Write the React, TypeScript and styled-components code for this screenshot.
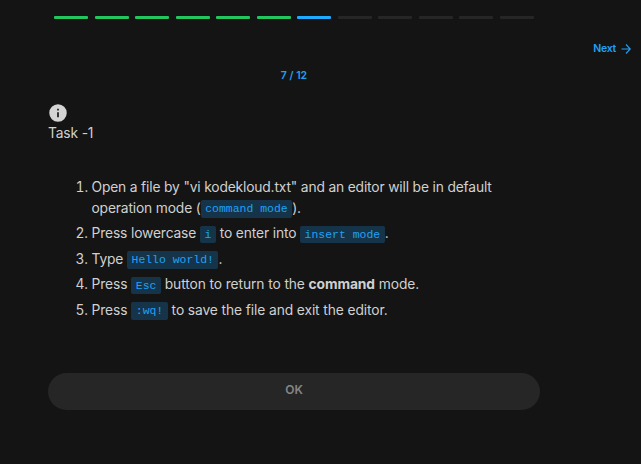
import React from "react";
import styled, { createGlobalStyle } from "styled-components";

const Global = createGlobalStyle`
  * { box-sizing: border-box; }
  body { margin: 0; background: #141414; color: #d0d0d0; font: 13.8px/21px Inter, sans-serif; }
`;
const Page = styled.main`
  display: flex; flex-direction: column; width: 641px; height: 464px; overflow: hidden; background: #141414;
`;
const Progress = styled.div`
  display: grid; grid-template-columns: repeat(12, 34px); column-gap: 6.55px; padding: 16px 0 0 54px; height: 42px;
`;
const Step = styled.span<{ $state: "done" | "current" | "todo" }>`
  height: 3px; border-radius: 1px;
  background: ${(p) => ({ done: "#22c55e", current: "#1eaaff", todo: "#262626" })[p.$state]};
`;
const Nav = styled.div`
  display: flex; justify-content: flex-end; height: 27px; padding-right: 10px;
`;
const NextButton = styled.button`
  display: flex; align-items: center; gap: 5px; height: 13px; padding: 0; border: 0; background: none;
  color: #1fa2f5; font: 600 10.5px/13px Inter, sans-serif; letter-spacing: -0.25px;
`;
const Counter = styled.div`
  width: 492px; margin-left: 48px; height: 34px; text-align: center; color: #1fa2f5; font: 600 10.5px/13px Inter, sans-serif;
`;
const Task = styled.section`
  width: 492px; margin-left: 48px;
`;
const InfoIcon = styled.svg`
  display: block; width: 20px; height: 20px;
`;
const Title = styled.div`
  height: 53px; line-height: 20px; letter-spacing: -0.15px;
`;
const Steps = styled.ol`
  margin: 0; padding: 0.5px 0 0 43.5px; height: 197px;
`;
const Item = styled.li<{ $tracking?: number }>`
  margin-bottom: 4.5px; letter-spacing: ${(p) => p.$tracking ?? -0.1}px;
`;
const Code = styled.code`
  padding: 2.4px 4.6px; border-radius: 2px; background: #163449; color: #1fa2f5;
  font: 11.45px "Liberation Mono", monospace; letter-spacing: 0;
`;
const OkButton = styled.button`
  display: block; width: 492px; height: 37px; padding: 0 0 5px; border: 0; border-radius: 19px;
  background: #262626; color: #858585; font: 600 12px Inter, sans-serif;
`;

export default function App() {
  return (
    <Page>
      <Global />
      <Progress>
        {Array.from({ length: 12 }, (_, i) => (
          <Step key={i} $state={i < 6 ? "done" : i === 6 ? "current" : "todo"} />
        ))}
      </Progress>
      <Nav>
        <NextButton>
          Next
          <svg width="10" height="11" viewBox="0 0 10 11" fill="none" stroke="currentColor" strokeWidth="1.1">
            <path d="M0.5 6H9M5 1.5L9.3 6L5 10.5" />
          </svg>
        </NextButton>
      </Nav>
      <Counter>7 / 12</Counter>
      <Task>
        <InfoIcon viewBox="0 0 24 24" fill="#d4d4d4">
          <path d="M12 1.5a10.5 10.5 0 1 0 0 21a10.5 10.5 0 0 0 0-21zm1 15.5h-2v-6h2zm0-8h-2V7h2z" />
        </InfoIcon>
        <Title>Task -1</Title>
        <Steps>
          <Item $tracking={-0.155}>Open a file by "vi kodekloud.txt" and an editor will be in default<br />operation mode (<Code>command mode</Code>).</Item>
          <Item $tracking={-0.14}>Press lowercase <Code>i</Code> to enter into <Code>insert mode</Code>.</Item>
          <Item $tracking={-0.15}>Type <Code>Hello world!</Code>.</Item>
          <Item>Press <Code>Esc</Code> button to return to the <b>command</b> mode.</Item>
          <Item>Press <Code>:wq!</Code> to save the file and exit the editor.</Item>
        </Steps>
        <OkButton>OK</OkButton>
      </Task>
    </Page>
  );
}
